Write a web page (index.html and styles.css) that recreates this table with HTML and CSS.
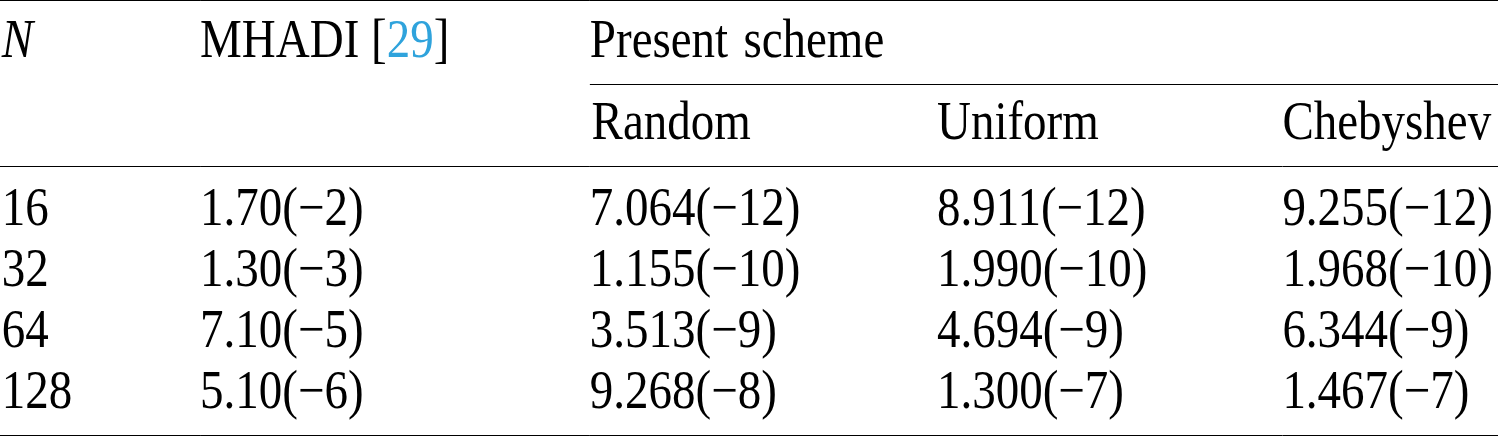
FILE: index.html
```html
<!DOCTYPE html>
<html lang="en">
  <head>
    <meta charset="UTF-8" />
    <meta name="viewport" content="width=device-width, initial-scale=1.0" />
    <title>Error comparison</title>
    <link rel="stylesheet" href="styles.css">
  </head>
  <body>
    <div class="sheet">
      <table class="results">
        <colgroup>
          <col class="col-n" />
          <col class="col-ref" />
          <col class="col-random" />
          <col class="col-uniform" />
          <col class="col-cheb" />
        </colgroup>
        <thead>
          <tr class="head-top">
            <th rowspan="2" class="span-cell"><i>N</i></th>
            <th rowspan="2" class="span-cell">MHADI [<a class="cite" href="#ref29">29</a>]</th>
            <th colspan="3" class="group">Present scheme</th>
          </tr>
          <tr class="head-sub">
            <th>Random</th>
            <th>Uniform</th>
            <th>Chebyshev</th>
          </tr>
        </thead>
        <tbody>
          <tr class="first">
            <td>16</td>
            <td>1.70(&minus;2)</td>
            <td>7.064(&minus;12)</td>
            <td>8.911(&minus;12)</td>
            <td>9.255(&minus;12)</td>
          </tr>
          <tr>
            <td>32</td>
            <td>1.30(&minus;3)</td>
            <td>1.155(&minus;10)</td>
            <td>1.990(&minus;10)</td>
            <td>1.968(&minus;10)</td>
          </tr>
          <tr>
            <td>64</td>
            <td>7.10(&minus;5)</td>
            <td>3.513(&minus;9)</td>
            <td>4.694(&minus;9)</td>
            <td>6.344(&minus;9)</td>
          </tr>
          <tr class="last">
            <td>128</td>
            <td>5.10(&minus;6)</td>
            <td>9.268(&minus;8)</td>
            <td>1.300(&minus;7)</td>
            <td>1.467(&minus;7)</td>
          </tr>
        </tbody>
      </table>
    </div>
  </body>
</html>
```

FILE: styles.css
```css
body {
  margin: 0;
  background-color: #fff;
  color: #000;
  font-family: "Liberation Serif", "Times New Roman", serif;
}

.sheet {
  width: 1498px;
  height: 437px;
  overflow: hidden;
}

/* the source typesets Times slightly condensed, so the table
   is laid out wider and squeezed back to the sheet width */
.results {
  width: 1722px;
  table-layout: fixed;
  border-collapse: separate;
  border-spacing: 0;
  font-size: 54px;
  line-height: 61px;
  transform: scaleX(0.87);
  transform-origin: left top;
}

.col-n { width: 230px; }
.col-ref { width: 448px; }
.col-random { width: 399px; }
.col-uniform { width: 397px; }
.col-cheb { width: 248px; }

.results th,
.results td {
  padding: 0;
  text-align: left;
  vertical-align: top;
  font-weight: normal;
  white-space: nowrap;
}

.results th:first-child,
.results td:first-child {
  padding-left: 2px;
}

.head-top th {
  border-top: 1px solid #000;
  padding-top: 8px;
  padding-bottom: 14px;
}

.head-top .group,
.head-top .span-cell {
  border-bottom: 1px solid #000;
}

.head-top .group {
  word-spacing: 4px;
}

.head-sub th {
  border-bottom: 1px solid #000;
  padding-top: 6px;
  padding-bottom: 14px;
}

.first td {
  padding-top: 10px;
}

.last td {
  padding-bottom: 14px;
  border-bottom: 1px solid #000;
}

.cite {
  color: #2fa3dc;
  text-decoration: none;
}
```
